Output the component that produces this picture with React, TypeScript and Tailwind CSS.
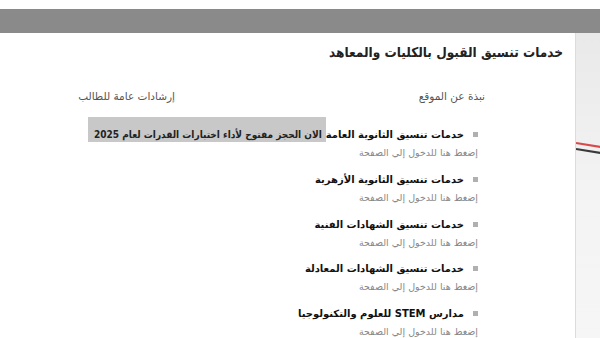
import React from 'react'

const items = [
  { title: 'خدمات تنسيق الثانوية العامة', marquee: true },
  { title: 'خدمات تنسيق الثانوية الأزهرية' },
  { title: 'خدمات تنسيق الشهادات الفنية' },
  { title: 'خدمات تنسيق الشهادات المعادلة' },
  { title: 'مدارس STEM للعلوم والتكنولوجيا' },
]

function FlagStrip() {
  return (
    <div className="relative w-[25px] shrink-0 border-l border-[#dcdcdc] bg-gradient-to-b from-[#e9e9e9] via-[#f3f3f3] to-[#f6f6f6]">
      <svg className="absolute left-0 top-[107px]" width="25" height="20" viewBox="0 0 25 20">
        <path d="M0 3 L25 7" stroke="#d84a4a" strokeWidth="2.2" />
        <path d="M0 9 L25 13" stroke="#3a3a3a" strokeWidth="2.2" />
      </svg>
    </div>
  )
}

export default function App() {
  return (
    <div className="h-[338px] w-[600px] overflow-hidden bg-white font-['DejaVu_Sans',sans-serif]">
      <div className="h-[9px] bg-white" />
      <div className="h-[24px] bg-[#8a8a8a]" />
      <div className="flex h-[305px]" dir="rtl">
        <FlagStrip />
        <div className="flex-1 bg-white">
          <h1 className="pr-3 pt-[9px] font-['DejaVu_Sans_Condensed','DejaVu_Sans',sans-serif] text-[13.5px] font-bold text-[#222]">
            خدمات تنسيق القبول بالكليات والمعاهد
          </h1>
          <div className="mt-[27px] flex">
            <div className="w-[310px] shrink-0">
              <h2 className="pr-[90px] text-[10.5px] text-[#555]">نبذة عن الموقع</h2>
              <ul className="mt-[22px] pr-[97px]">
                {items.map((item) => (
                  <li key={item.title} className="mb-[11.5px] whitespace-nowrap">
                    <div className="flex items-center">
                      <span className="ml-[9px] h-[5px] w-[5px] shrink-0 bg-[#b0b0b0]" />
                      <span className="text-[10px] font-bold text-[#111]">{item.title}</span>
                      {item.marquee && (
                        <span className="-mb-[1px] -mt-[11px] inline-flex h-[25px] w-[238px] shrink-0 items-end overflow-hidden bg-[#c8c8c8] pb-0 pr-[4px] font-['DejaVu_Sans_Condensed','DejaVu_Sans',sans-serif] text-[10px] font-bold text-[#222]">
                          الان الحجز مفتوح لأداء اختبارات القدرات لعام 2025
                        </span>
                      )}
                    </div>
                    <div className="mt-[4px] text-[9.5px] text-[#888]">إضغط هنا للدخول إلي الصفحة</div>
                  </li>
                ))}
              </ul>
            </div>
            <div className="flex-1">
              <h2 className="pr-[90px] text-[10.5px] text-[#555]">إرشادات عامة للطالب</h2>
            </div>
          </div>
        </div>
      </div>
    </div>
  )
}
